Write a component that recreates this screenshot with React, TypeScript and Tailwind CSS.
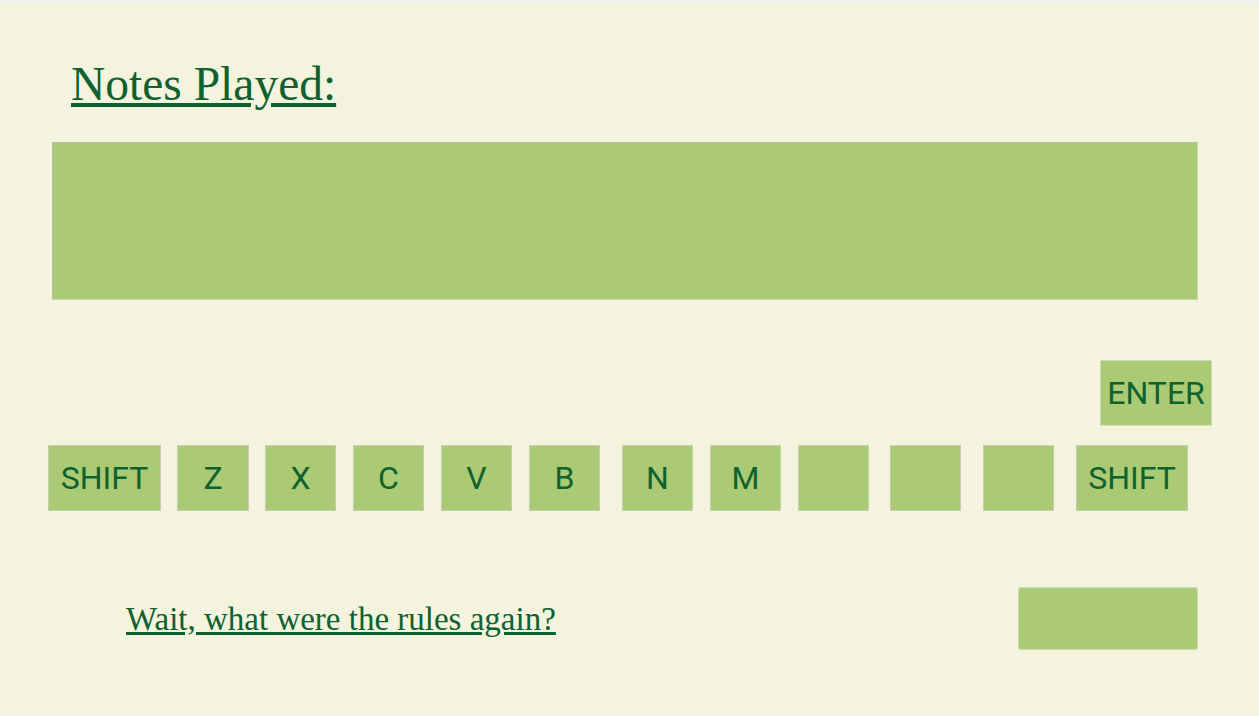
import React from "react";

const keys: { label: string; cls: string }[] = [
  { label: "SHIFT", cls: "w-[113px]" },
  { label: "Z", cls: "w-[72px] ml-[16px]" },
  { label: "X", cls: "w-[71px] ml-[16px]" },
  { label: "C", cls: "w-[71px] ml-[17px]" },
  { label: "V", cls: "w-[71px] ml-[17px]" },
  { label: "B", cls: "w-[71px] ml-[17px]" },
  { label: "N", cls: "w-[71px] ml-[22px]" },
  { label: "M", cls: "w-[71px] ml-[17px]" },
  { label: "", cls: "w-[71px] ml-[17px]" },
  { label: "", cls: "w-[71px] ml-[21px]" },
  { label: "", cls: "w-[71px] ml-[22px]" },
  { label: "SHIFT", cls: "w-[112px] ml-[22px]" },
];

export default function App() {
  return (
    <div className="w-full min-h-[716px] bg-[#f3f3de] flex flex-col">
      <div className="h-[3px] bg-[#efefef]" />
      <div className="flex flex-col pt-[53px]">
        <div className="pl-[71px] h-[56px]">
          <span
            className="text-[47.5px] leading-[56px] text-[#0f6130] underline"
            style={{ fontFamily: '"Liberation Serif", "Times New Roman", serif' }}
          >
            Notes Played:
          </span>
        </div>
        <div className="ml-[52px] mt-[30px] w-[1146px] h-[158px] bg-[#aaca73] border border-t-[#b8c1a0] border-l-[#b8c1a0] border-r-[#cbd6b4] border-b-[#cbd6b4]" />
        <div className="flex justify-end pr-[47px] mt-[60px]">
          <div
            className="w-[112px] h-[66px] bg-[#aaca73] border border-[#d3dcbd] flex items-center justify-center text-[32px] text-[#0f6130]"
            style={{ fontFamily: "Roboto, sans-serif" }}
          >
            ENTER
          </div>
        </div>
        <div className="flex pl-[48px] mt-[19px]" style={{ fontFamily: "Roboto, sans-serif" }}>
          {keys.map((k, i) => (
            <div
              key={i}
              className={`${k.cls} h-[66px] bg-[#aaca73] border border-[#c5cfae] flex items-center justify-center text-[32px] text-[#0f6130]`}
            >
              {k.label}
            </div>
          ))}
        </div>
        <div className="flex items-center justify-between pl-[126px] pr-[61px] mt-[76px]">
          <span
            className="text-[33px] leading-[38px] text-[#0f6130] underline"
            style={{ fontFamily: '"Liberation Serif", "Times New Roman", serif' }}
          >
            Wait, what were the rules again?
          </span>
          <div className="w-[180px] h-[63px] bg-[#aaca73] rounded-[3px] border border-[#d0d8ba]" />
        </div>
      </div>
    </div>
  );
}
